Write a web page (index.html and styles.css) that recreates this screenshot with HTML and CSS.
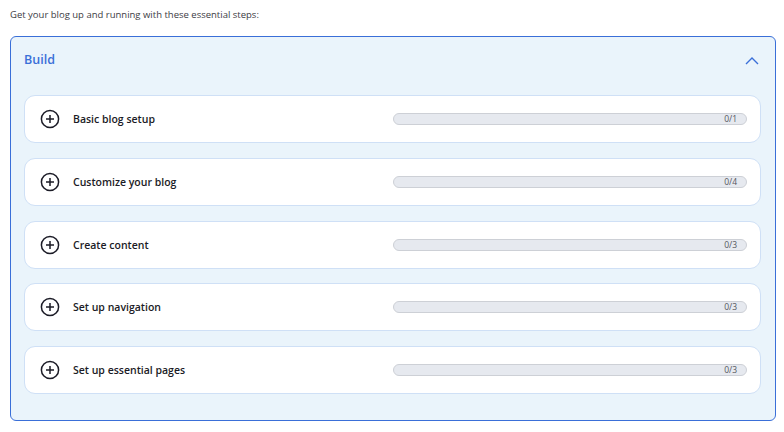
FILE: index.html
```html
<!DOCTYPE html>
<html>
<head>
<meta charset="utf-8">
<link rel="stylesheet" href="styles.css">
</head>
<body>
<p class="intro">Get your blog up and running with these essential steps:</p>
<section class="panel">
  <header class="panel-head">
    <h2 class="panel-title">Build</h2>
    <svg class="chevron" width="14" height="8" viewBox="0 0 14 8"><path d="M1 7 L7 1 L13 7" fill="none" stroke="#3a6fd8" stroke-width="1.4"/></svg>
  </header>
  <div class="tasks">
    <div class="task">
      <svg class="plus" width="20" height="20" viewBox="0 0 20 20"><circle cx="10" cy="10" r="8.6" fill="none" stroke="#1b1b26" stroke-width="1.5"/><path d="M10 6v8M6 10h8" stroke="#1b1b26" stroke-width="1.5"/></svg>
      <span class="task-name">Basic blog setup</span>
      <div class="bar"><span class="bar-text">0/1</span></div>
    </div>
    <div class="task">
      <svg class="plus" width="20" height="20" viewBox="0 0 20 20"><circle cx="10" cy="10" r="8.6" fill="none" stroke="#1b1b26" stroke-width="1.5"/><path d="M10 6v8M6 10h8" stroke="#1b1b26" stroke-width="1.5"/></svg>
      <span class="task-name">Customize your blog</span>
      <div class="bar"><span class="bar-text">0/4</span></div>
    </div>
    <div class="task">
      <svg class="plus" width="20" height="20" viewBox="0 0 20 20"><circle cx="10" cy="10" r="8.6" fill="none" stroke="#1b1b26" stroke-width="1.5"/><path d="M10 6v8M6 10h8" stroke="#1b1b26" stroke-width="1.5"/></svg>
      <span class="task-name">Create content</span>
      <div class="bar"><span class="bar-text">0/3</span></div>
    </div>
    <div class="task">
      <svg class="plus" width="20" height="20" viewBox="0 0 20 20"><circle cx="10" cy="10" r="8.6" fill="none" stroke="#1b1b26" stroke-width="1.5"/><path d="M10 6v8M6 10h8" stroke="#1b1b26" stroke-width="1.5"/></svg>
      <span class="task-name">Set up navigation</span>
      <div class="bar"><span class="bar-text">0/3</span></div>
    </div>
    <div class="task">
      <svg class="plus" width="20" height="20" viewBox="0 0 20 20"><circle cx="10" cy="10" r="8.6" fill="none" stroke="#1b1b26" stroke-width="1.5"/><path d="M10 6v8M6 10h8" stroke="#1b1b26" stroke-width="1.5"/></svg>
      <span class="task-name">Set up essential pages</span>
      <div class="bar"><span class="bar-text">0/3</span></div>
    </div>
  </div>
</section>
</body>
</html>
```
FILE: styles.css
```css
html, body {
  margin: 0;
  padding: 0;
  background: #ffffff;
}
body {
  font-family: "Open Sans", "Noto Sans", sans-serif;
  padding: 0 8px 0 10px;
  width: 766px;
}
.intro {
  margin: 0;
  padding-top: 7px;
  height: 29px;
  font-size: 9.5px;
  line-height: 16px;
  color: #3c3c44;
}
.panel {
  border: 1px solid #3a6fd8;
  border-radius: 6px;
  background: #eaf4fb;
  padding: 0 14px 26px 13px;
}
.panel-head {
  display: flex;
  align-items: center;
  justify-content: space-between;
  height: 45px;
  margin-bottom: 13px;
}
.panel-title {
  margin: 0;
  font-size: 12.5px;
  font-weight: 600;
  color: #3a6fd8;
}
.chevron {
  margin-right: 2px;
  margin-top: 2px;
}
.tasks {
  display: flex;
  flex-direction: column;
  gap: 14.75px;
}
.task {
  display: flex;
  align-items: center;
  height: 46px;
  background: #ffffff;
  border: 1px solid #cfe0f6;
  border-radius: 11px;
  padding: 0 13px 0 15px;
}
.plus {
  flex: none;
}
.task-name {
  margin-left: 13px;
  font-size: 10.5px;
  font-weight: 600;
  color: #1b1b26;
  flex: 1;
}
.bar {
  width: 343px;
  height: 10px;
  border: 1px solid #cdd0d6;
  border-radius: 6px;
  background: #e6e9ef;
  display: flex;
  align-items: center;
  justify-content: flex-end;
  padding-right: 9px;
  box-sizing: content-box;
}
.bar-text {
  font-size: 8.5px;
  color: #55575e;
  line-height: 10px;
}
```
